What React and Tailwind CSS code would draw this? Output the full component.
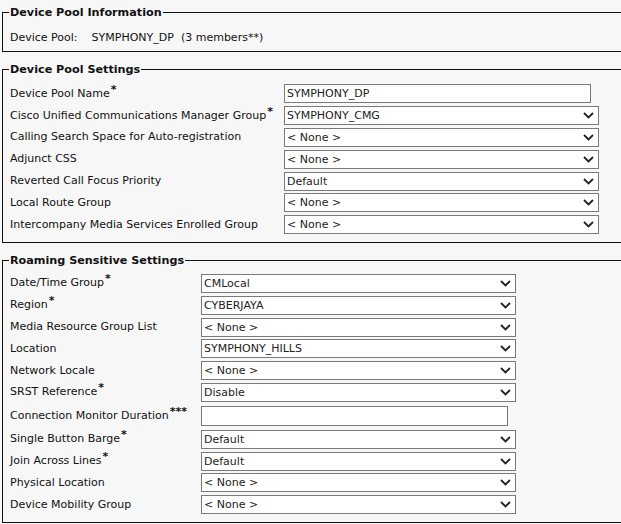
import React from 'react';

const font = { fontFamily: '"DejaVu Sans", Verdana, sans-serif' };

const Chevron = () => (
    <svg width="11" height="7" viewBox="0 0 11 7" className="shrink-0">
        <path d="M1 1 L5.5 5.5 L10 1" fill="none" stroke="#222" strokeWidth="1.8" />
    </svg>
);

const Select = ({ value, width }) => (
    <div className={`flex h-[19px] items-center justify-between border border-[#7a7a7a] bg-white pl-[2px] pr-[4px] ${width}`}>
        <span className="text-[11px] leading-none text-[#222]">{value}</span>
        <Chevron />
    </div>
);

const TextBox = ({ value, width, height }) => (
    <div className={`flex items-center border border-[#7a7a7a] bg-white pl-[2px] ${width} ${height}`}>
        <span className="text-[11px] leading-none text-[#222]">{value}</span>
    </div>
);

const Label = ({ text, stars, width }) => (
    <div className={`shrink-0 whitespace-nowrap text-[11px] leading-[14px] text-[#111] ${width}`}>
        {text}
        {stars && (
            <span className="relative top-[-4px] ml-[1px] text-[11px] font-bold leading-none">{stars}</span>
        )}
    </div>
);

const Row = ({ children, h = 'h-[21.8px]' }) => (
    <div className={`flex items-center ${h}`}>{children}</div>
);

const Section = ({ title, children, className = '' }) => (
    <fieldset className={`ml-[2px] w-[660px] border border-[#111] pl-[7px] ${className}`}>
        <legend className="ml-[-1px] px-[1px] text-[11.2px] font-bold leading-[15px] text-[#111]">{title}</legend>
        {children}
    </fieldset>
);

const poolSettings = [
    { label: 'Cisco Unified Communications Manager Group', stars: '*', value: 'SYMPHONY_CMG' },
    { label: 'Calling Search Space for Auto-registration', value: '< None >' },
    { label: 'Adjunct CSS', value: '< None >' },
    { label: 'Reverted Call Focus Priority', value: 'Default' },
    { label: 'Local Route Group', value: '< None >' },
    { label: 'Intercompany Media Services Enrolled Group', value: '< None >' }
];

const roamingTop = [
    { label: 'Date/Time Group', stars: '*', value: 'CMLocal' },
    { label: 'Region', stars: '*', value: 'CYBERJAYA' },
    { label: 'Media Resource Group List', value: '< None >' },
    { label: 'Location', value: 'SYMPHONY_HILLS' },
    { label: 'Network Locale', value: '< None >' },
    { label: 'SRST Reference', stars: '*', value: 'Disable' }
];

const roamingBottom = [
    { label: 'Single Button Barge', stars: '*', value: 'Default' },
    { label: 'Join Across Lines', stars: '*', value: 'Default' },
    { label: 'Physical Location', value: '< None >' },
    { label: 'Device Mobility Group', value: '< None >' }
];

export default function App() {
    return (
        <div className="h-[524px] w-[621px] overflow-hidden bg-[#f7f7f7] pt-[5px]" style={font}>
            <Section title="Device Pool Information" className="pb-[1px]">
                <div className="flex h-[30px] items-center pt-[6px] text-[11px] text-[#111]">
                    <span>Device Pool:</span>
                    <span className="ml-[14px]">SYMPHONY_DP&nbsp; (3 members**)</span>
                </div>
            </Section>

            <Section title="Device Pool Settings" className="mt-[10px] pb-[6px] pt-[6px]">
                <Row>
                    <Label text="Device Pool Name" stars="*" width="w-[274px]" />
                    <TextBox value="SYMPHONY_DP" width="w-[307px]" height="h-[19px]" />
                </Row>
                {poolSettings.map((r, i) => (
                    <Row key={i}>
                        <Label text={r.label} stars={r.stars} width="w-[274px]" />
                        <Select value={r.value} width="w-[315px]" />
                    </Row>
                ))}
            </Section>

            <Section title="Roaming Sensitive Settings" className="mt-[10px] pb-[6px] pt-[5px]">
                {roamingTop.map((r, i) => (
                    <Row key={i}>
                        <Label text={r.label} stars={r.stars} width="w-[191px]" />
                        <Select value={r.value} width="w-[315px]" />
                    </Row>
                ))}
                <Row h="h-[25px]">
                    <Label text="Connection Monitor Duration" stars="***" width="w-[191px]" />
                    <TextBox value="" width="w-[307px]" height="h-[20px]" />
                </Row>
                {roamingBottom.map((r, i) => (
                    <Row key={i}>
                        <Label text={r.label} stars={r.stars} width="w-[191px]" />
                        <Select value={r.value} width="w-[315px]" />
                    </Row>
                ))}
            </Section>
        </div>
    );
}
